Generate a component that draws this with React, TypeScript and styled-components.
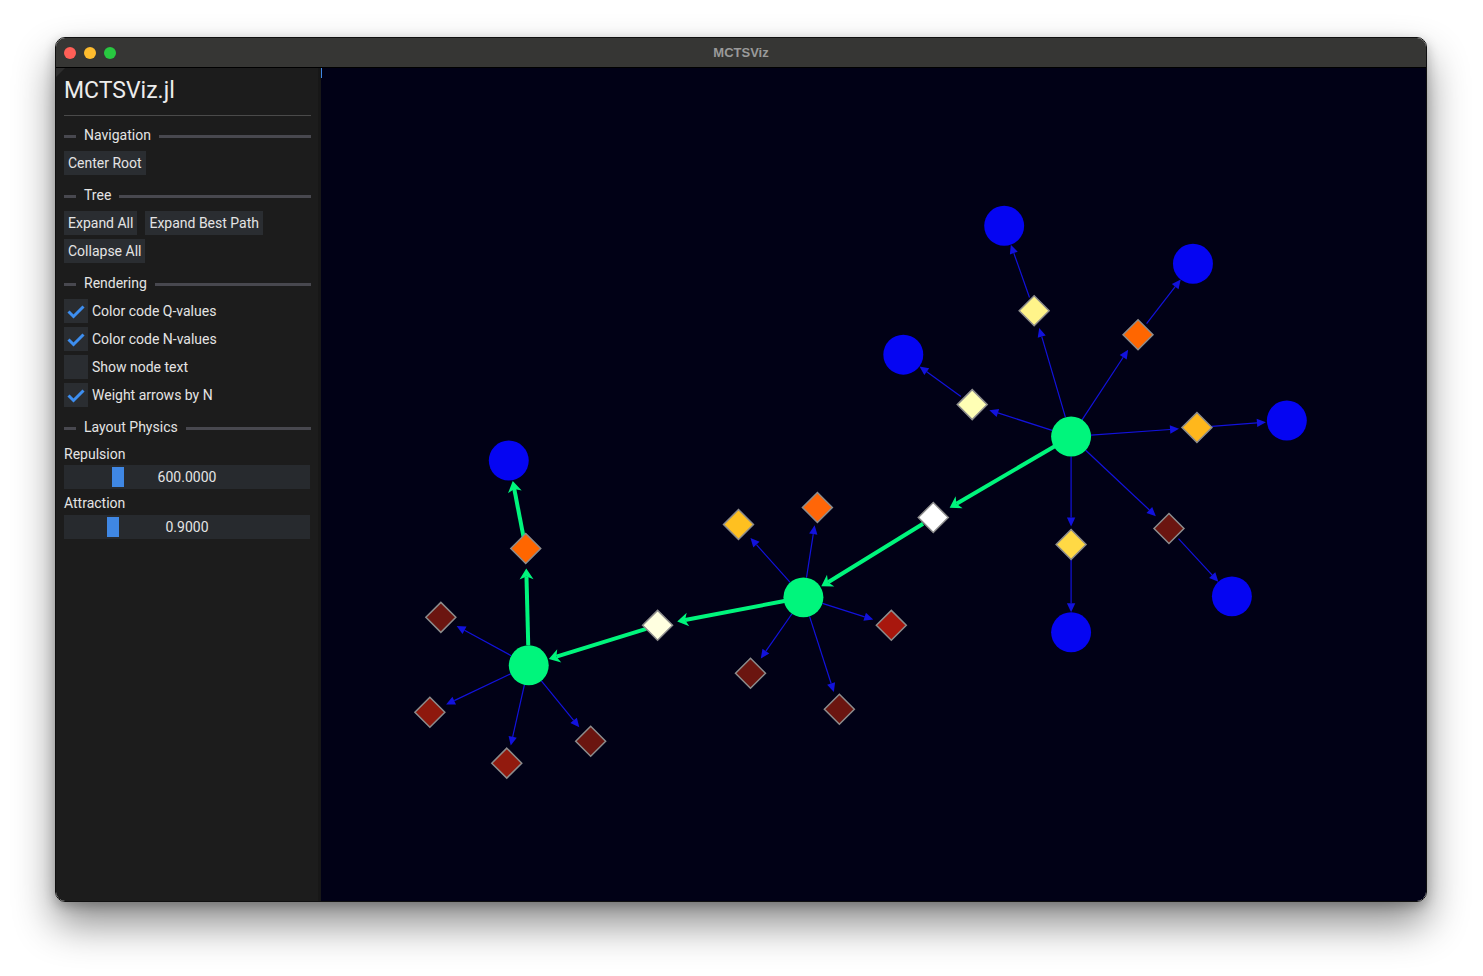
import React from "react";
import styled, { createGlobalStyle } from "styled-components";

const GlobalStyle = createGlobalStyle`
    html, body {
        margin: 0;
        padding: 0;
        background: #ffffff;
        font-family: Roboto, "Liberation Sans", sans-serif;
    }
`

const Page = styled.div`
    padding: 37px 0 0 55px;
    height: 976px;
    box-sizing: border-box;
`

const Window = styled.div`
    width: 1372px;
    height: 865px;
    box-sizing: border-box;
    display: flex;
    flex-direction: column;
    border: 1px solid #101010;
    border-radius: 10px;
    overflow: hidden;
    box-shadow: 0 22px 40px rgba(0, 0, 0, 0.45), 0 4px 12px rgba(0, 0, 0, 0.25);
`

const TitleBar = styled.div`
    height: 29px;
    flex: none;
    background: #363634;
    border-bottom: 1px solid #000;
    display: flex;
    align-items: center;
    position: relative;
`

const Lights = styled.div`
    display: flex;
    gap: 8px;
    padding-left: 8px;
`

const Light = styled.span<{ color: string }>`
    width: 12px;
    height: 12px;
    border-radius: 50%;
    background: ${p => p.color};
`

const WindowTitle = styled.div`
    position: absolute;
    left: 0;
    right: 0;
    text-align: center;
    font-size: 13px;
    font-weight: 700;
    color: #9a9a9a;
    font-family: "Liberation Sans", Roboto, sans-serif;
`

const Body = styled.div`
    flex: 1;
    display: flex;
    min-height: 0;
`

const Sidebar = styled.div`
    width: 265px;
    flex: none;
    box-sizing: border-box;
    background: #1c1c1c;
    border-right: 3px solid #171717;
    padding: 0 7px 0 8px;
    display: flex;
    flex-direction: column;
    color: #e4e4e4;
    font-size: 14px;
    position: relative;
    &::before {
        content: "";
        position: absolute;
        left: 0;
        top: 0;
        border-top: 9px solid #2e2e2e;
        border-right: 9px solid transparent;
    }
`

const AppTitle = styled.div`
    margin-top: 9px;
    font-size: 23px;
    line-height: 28px;
    color: #ececec;
`

const Divider = styled.div`
    margin-top: 10px;
    height: 1px;
    background: #4a4a4a;
`

const HeaderRow = styled.div<{ $top?: number }>`
    margin-top: ${p => p.$top ?? 12}px;
    height: 18px;
    display: flex;
    align-items: center;
    gap: 8px;
    &::before, &::after {
        content: "";
        height: 3px;
        background: #48484f;
    }
    &::before {
        width: 12px;
    }
    &::after {
        flex: 1;
    }
`

const HeaderLabel = styled.span`
    white-space: nowrap;
    line-height: 16px;
    padding-bottom: 2px;
`

const ButtonGrid = styled.div`
    margin-top: 6px;
    display: flex;
    flex-wrap: wrap;
    gap: 4px 8px;
    width: 210px;
`

const Button = styled.div`
    height: 24px;
    line-height: 24px;
    padding: 0 4px;
    background: #2a2d31;
    color: #e4e4e4;
    white-space: nowrap;
`

const CheckList = styled.div`
    margin-top: 6px;
    display: flex;
    flex-direction: column;
    gap: 4px;
`

const CheckRow = styled.div`
    display: flex;
    align-items: center;
    gap: 4px;
    height: 24px;
`

const CheckBox = styled.div`
    width: 24px;
    height: 24px;
    background: #2a2d31;
    display: flex;
    align-items: center;
    justify-content: center;
`

const FieldLabel = styled.div<{ $top: number }>`
    margin-top: ${p => p.$top}px;
    height: 18px;
    line-height: 18px;
`

const Slider = styled.div<{ $top: number }>`
    margin-top: ${p => p.$top}px;
    margin-right: 1px;
    height: 24px;
    background: #272a2e;
    position: relative;
    display: flex;
    align-items: center;
    justify-content: center;
`

const SliderGrab = styled.div`
    position: absolute;
    top: 2px;
    bottom: 2px;
    width: 12px;
    background: #3f87e4;
`

const SliderValue = styled.span`
    position: relative;
    color: #e4e4e4;
`

const Canvas = styled.div`
    flex: 1;
    background: #010116;
    position: relative;
    &::before {
        content: "";
        position: absolute;
        left: 0;
        top: 0;
        width: 1px;
        height: 10px;
        background: #3f87e4;
    }
`

const GraphSvg = styled.svg`
    display: block;
    width: 100%;
    height: 100%;
`

type P = [number, number];

const Check = () => (
    <svg width="24" height="24" viewBox="0 0 24 24">
        <path d="M4.5 12.5 L9.5 17.5 L19.5 7.5" fill="none" stroke="#3d8ef0" strokeWidth="3" strokeLinecap="butt" />
    </svg>
)

const SectionHeader = (props: { label: string, top?: number }) => (
    <HeaderRow $top={props.top}><HeaderLabel>{props.label}</HeaderLabel></HeaderRow>
)

const SliderField = (props: { label: string, value: number, min: number, max: number, digits: number, labelTop: number, top: number }) => {
    const frac = (props.value - props.min) / (props.max - props.min)
    return <>
        <FieldLabel $top={props.labelTop}>{props.label}</FieldLabel>
        <Slider $top={props.top}>
            <SliderGrab style={{ left: `calc(2px + (100% - 16px) * ${frac})` }} />
            <SliderValue>{props.value.toFixed(props.digits)}</SliderValue>
        </Slider>
    </>
}

// graph data, positions in screen pixels
const GREEN = "#00f57c"
const BLUE_NODE = "#0505f2"
const EDGE_BLUE = "#1212dc"

const rootA: P = [1072, 436]
const rootB: P = [804, 597]
const rootC: P = [529, 665]

const circles: { p: P, c: string }[] = [
    { p: rootA, c: GREEN }, { p: rootB, c: GREEN }, { p: rootC, c: GREEN },
    { p: [1005, 225], c: BLUE_NODE }, { p: [1194, 263], c: BLUE_NODE }, { p: [904, 354], c: BLUE_NODE },
    { p: [1288, 420], c: BLUE_NODE }, { p: [1233, 596], c: BLUE_NODE }, { p: [1072, 632], c: BLUE_NODE },
    { p: [509, 460], c: BLUE_NODE },
]

const diamonds: { p: P, c: string }[] = [
    { p: [1035, 310], c: "#fff48a" },
    { p: [1139, 334], c: "#ff6600" },
    { p: [973, 404], c: "#ffffb5" },
    { p: [1198, 427], c: "#ffb71c" },
    { p: [1072, 544], c: "#ffd945" },
    { p: [1170, 528], c: "#6b1510" },
    { p: [934, 517], c: "#ffffff" },
    { p: [739, 524], c: "#ffc020" },
    { p: [818, 507], c: "#ff6608" },
    { p: [892, 625], c: "#a8170d" },
    { p: [751, 673], c: "#6b1510" },
    { p: [840, 709], c: "#6b1510" },
    { p: [658, 625], c: "#ffffe0" },
    { p: [526, 548], c: "#ff6600" },
    { p: [441, 617], c: "#6b1510" },
    { p: [430, 712], c: "#8e180d" },
    { p: [507, 763], c: "#921a0e" },
    { p: [591, 741], c: "#6b1510" },
]

const d = (i: number) => diamonds[i].p
const c = (i: number) => circles[i].p

// [from, to, fromRadius, toRadius]
const blueEdges: [P, P, number, number][] = [
    [rootA, d(0), 20, 18], [rootA, d(1), 20, 18], [rootA, d(2), 20, 18],
    [rootA, d(3), 20, 18], [rootA, d(4), 20, 18], [rootA, d(5), 20, 18],
    [d(0), c(3), 14, 20], [d(1), c(4), 14, 20], [d(2), c(5), 14, 20],
    [d(3), c(6), 15, 21], [d(4), c(8), 15, 20], [d(5), c(7), 14, 20],
    [rootB, d(7), 20, 18], [rootB, d(8), 20, 18], [rootB, d(9), 20, 19],
    [rootB, d(10), 20, 18], [rootB, d(11), 20, 18],
    [rootC, d(14), 20, 18], [rootC, d(15), 20, 18], [rootC, d(16), 20, 18], [rootC, d(17), 20, 18],
]

const greenEdges: [P, P, number, number][] = [
    [rootA, d(6), 18, 19],
    [d(6), rootB, 12, 21],
    [rootB, d(12), 18, 20],
    [d(12), rootC, 12, 21],
    [rootC, d(13), 20, 20],
    [d(13), c(9), 12, 21],
]

const Arrow = (props: { from: P, to: P, r0: number, r1: number, width: number, color: string, len: number, half: number, notch: number }) => {
    const [x0, y0] = props.from
    const [x1, y1] = props.to
    const dist = Math.hypot(x1 - x0, y1 - y0)
    const ux = (x1 - x0) / dist, uy = (y1 - y0) / dist
    const nx = -uy, ny = ux
    const sx = x0 + ux * props.r0, sy = y0 + uy * props.r0
    const tx = x1 - ux * props.r1, ty = y1 - uy * props.r1
    const bx = tx - ux * props.len, by = ty - uy * props.len
    const mx = bx + ux * props.notch, my = by + uy * props.notch
    const pts = [
        [tx, ty],
        [bx + nx * props.half, by + ny * props.half],
        [mx, my],
        [bx - nx * props.half, by - ny * props.half],
    ].map(p => p.join(",")).join(" ")
    return <g>
        <line x1={sx} y1={sy} x2={mx} y2={my} stroke={props.color} strokeWidth={props.width} />
        <polygon points={pts} fill={props.color} />
    </g>
}

const Graph = () => (
    <GraphSvg viewBox="321 67 1105 834" preserveAspectRatio="xMinYMin meet">
        {blueEdges.map(([a, b, r0, r1], i) =>
            <Arrow key={"b" + i} from={a} to={b} r0={r0} r1={r1} width={1.2} color={EDGE_BLUE} len={9} half={4.2} notch={0} />)}
        {greenEdges.map(([a, b, r0, r1], i) =>
            <Arrow key={"g" + i} from={a} to={b} r0={r0} r1={r1} width={4} color={GREEN} len={11} half={7} notch={3} />)}
        {diamonds.map((n, i) => {
            const [x, y] = n.p
            const s = 15
            return <polygon key={"d" + i} points={`${x},${y - s} ${x + s},${y} ${x},${y + s} ${x - s},${y}`}
                fill={n.c} stroke="#8c8c8c" strokeWidth={1.5} />
        })}
        {circles.map((n, i) => <circle key={"c" + i} cx={n.p[0]} cy={n.p[1]} r={20} fill={n.c} />)}
    </GraphSvg>
)

export default function App() {
    return <>
        <GlobalStyle />
        <Page>
            <Window>
                <TitleBar>
                    <Lights>
                        <Light color="#ff5f57" />
                        <Light color="#febc2e" />
                        <Light color="#28c840" />
                    </Lights>
                    <WindowTitle>MCTSViz</WindowTitle>
                </TitleBar>
                <Body>
                    <Sidebar>
                        <AppTitle>MCTSViz.jl</AppTitle>
                        <Divider />
                        <SectionHeader label="Navigation" top={11} />
                        <ButtonGrid>
                            <Button>Center Root</Button>
                        </ButtonGrid>
                        <SectionHeader label="Tree" />
                        <ButtonGrid>
                            <Button>Expand All</Button>
                            <Button>Expand Best Path</Button>
                            <Button>Collapse All</Button>
                        </ButtonGrid>
                        <SectionHeader label="Rendering" />
                        <CheckList>
                            <CheckRow><CheckBox><Check /></CheckBox>Color code Q-values</CheckRow>
                            <CheckRow><CheckBox><Check /></CheckBox>Color code N-values</CheckRow>
                            <CheckRow><CheckBox />Show node text</CheckRow>
                            <CheckRow><CheckBox><Check /></CheckBox>Weight arrows by N</CheckRow>
                        </CheckList>
                        <SectionHeader label="Layout Physics" />
                        <SliderField label="Repulsion" value={600} min={0} max={3000} digits={4} labelTop={8} top={2} />
                        <SliderField label="Attraction" value={0.9} min={0} max={5} digits={4} labelTop={5} top={3} />
                    </Sidebar>
                    <Canvas>
                        <Graph />
                    </Canvas>
                </Body>
            </Window>
        </Page>
    </>
}
